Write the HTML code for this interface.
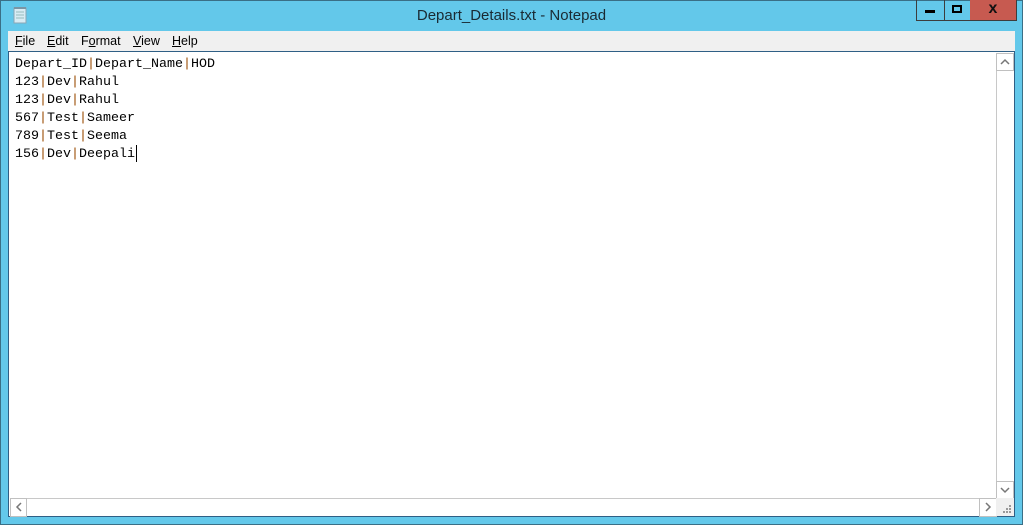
<!DOCTYPE html>
<html><head><meta charset="utf-8"><style>
*{margin:0;padding:0;box-sizing:border-box}
body{width:1023px;height:525px;background:#63c8ea;position:relative;overflow:hidden;font-family:"Liberation Sans",sans-serif}
.frame{position:absolute;left:0;top:0;width:1023px;height:525px;border:1px solid #3a6f86}
.title{position:absolute;left:0;top:7px;width:1023px;text-align:center;font-size:15px;color:#1a2a33}
.btn{position:absolute;top:0;height:21px;border:1px solid #3d3d3d;border-top:none}
.menu{position:absolute;left:8px;top:31px;width:1007px;height:20px;background:#f0f0f0;font-size:12.5px;color:#000}
.menu span{position:absolute;top:3px}
.menu u{text-decoration:underline}
.edit{position:absolute;left:8px;top:51px;width:1007px;height:466px;background:#fff;border:1px solid #2f5f85}
.text{position:absolute;left:6px;top:4px;font-family:"Liberation Mono",monospace;font-size:13.33px;line-height:18px;color:#000;white-space:pre}
.p{color:#9a4a00}
.vs{position:absolute;left:987px;top:1px;width:18px;height:446px;background:#fff;border-left:1px solid #c8c8c8}
.hs{position:absolute;left:1px;top:446px;width:986px;height:18px;background:#fff;border-top:1px solid #c8c8c8}
.box{position:absolute;border:1px solid #c0c0c0;background:#fff}
.corner{position:absolute;left:987px;top:446px;width:18px;height:18px;background:#f0f0f0}
</style></head><body>
<div class="frame"></div>
<svg style="position:absolute;left:12px;top:6px" width="16" height="18" viewBox="0 0 16 18"><rect x="2" y="2" width="12" height="15" fill="#d8ecf4" stroke="#8aa6b5"/><line x1="4" y1="6" x2="12" y2="6" stroke="#9bb"/><line x1="4" y1="9" x2="12" y2="9" stroke="#9bb"/><line x1="4" y1="12" x2="12" y2="12" stroke="#9bb"/><rect x="2" y="1" width="12" height="2" fill="#7a96a5"/></svg>
<div class="title">Depart_Details.txt - Notepad</div>
<div class="btn" style="left:916px;width:29px"><div style="position:absolute;left:8px;top:10px;width:10px;height:3px;background:#000"></div></div>
<div class="btn" style="left:944px;width:27px;border-left:none"><div style="position:absolute;left:8px;top:5px;width:10px;height:8px;border:2px solid #000"></div></div>
<div class="btn" style="left:970px;width:47px;background:#c75a50;border-left:none"><div style="position:absolute;left:0;width:100%;top:0;text-align:center;font-weight:bold;font-size:16px;color:#111">x</div></div>
<div class="menu">
<span style="left:7px"><u>F</u>ile</span>
<span style="left:39px"><u>E</u>dit</span>
<span style="left:73px">F<u>o</u>rmat</span>
<span style="left:125px"><u>V</u>iew</span>
<span style="left:164px"><u>H</u>elp</span>
</div>
<div class="edit">
<div class="text">Depart_ID<span class="p">|</span>Depart_Name<span class="p">|</span>HOD
123<span class="p">|</span>Dev<span class="p">|</span>Rahul
123<span class="p">|</span>Dev<span class="p">|</span>Rahul
567<span class="p">|</span>Test<span class="p">|</span>Sameer
789<span class="p">|</span>Test<span class="p">|</span>Seema
156<span class="p">|</span>Dev<span class="p">|</span>Deepali</div>
<div style="position:absolute;left:127px;top:93px;width:1px;height:17px;background:#000"></div>
<div class="vs">
<div class="box" style="left:-1px;top:0;width:18px;height:18px"><svg width="16" height="16"><path d="M4 10 L8 6 L12 10" fill="none" stroke="#777" stroke-width="1.5"/></svg></div>
<div class="box" style="left:-1px;top:428px;width:18px;height:18px"><svg width="16" height="16"><path d="M4 6 L8 10 L12 6" fill="none" stroke="#777" stroke-width="1.5"/></svg></div>
</div>
<div class="hs">
<div class="box" style="left:0;top:-1px;width:17px;height:19px"><svg width="16" height="16"><path d="M10 4 L6 8 L10 12" fill="none" stroke="#777" stroke-width="1.5"/></svg></div>
<div class="box" style="left:969px;top:-1px;width:18px;height:19px"><svg width="16" height="16"><path d="M6 4 L10 8 L6 12" fill="none" stroke="#777" stroke-width="1.5"/></svg></div>
</div>
<div class="corner"><svg width="18" height="18"><g fill="#999"><rect x="13" y="7" width="2" height="2"/><rect x="10" y="10" width="2" height="2"/><rect x="13" y="10" width="2" height="2"/><rect x="7" y="13" width="2" height="2"/><rect x="10" y="13" width="2" height="2"/><rect x="13" y="13" width="2" height="2"/></g></svg></div>
</div>
</body></html>
